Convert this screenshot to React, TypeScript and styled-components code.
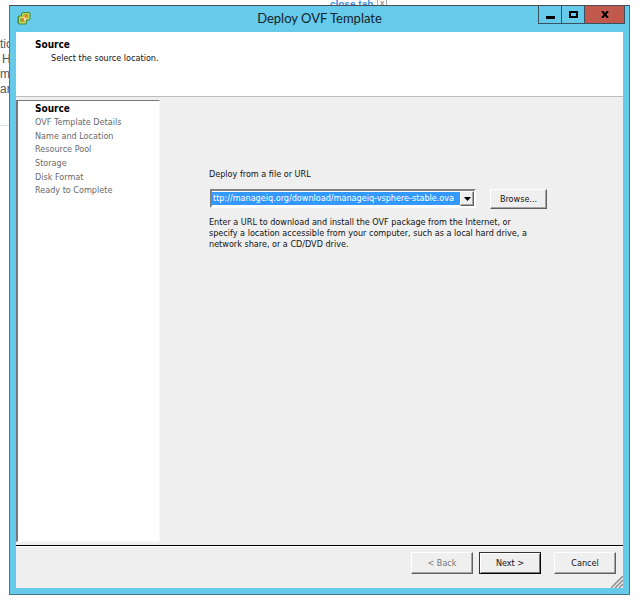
import React from 'react';
import styled, { createGlobalStyle, css } from 'styled-components';

const uiFont = '"DejaVu Sans Condensed", Tahoma, "DejaVu Sans", sans-serif';

const GlobalStyle = createGlobalStyle`
  *, *::before, *::after { box-sizing: border-box; }
  body { margin: 0; background: #fff; color: #111; font: 9px/11px ${uiFont}; }
  h1, h2, p, ol { margin: 0; padding: 0; }
  button, input { font: inherit; color: inherit; margin: 0; border-radius: 0; }
`;

const Desktop = styled.div`
  position: relative;
  display: flex;
  min-height: 100vh;
  padding: 5px 10px 9px 9px;
`;

const PageBehind = styled.div`
  position: absolute;
  top: 37px;
  left: 0;
  width: 20px;
  height: 89px;
  overflow: hidden;
  border-bottom: 1px solid #d5e3f0;
  color: #555;
  font: 12px/15px "Liberation Sans", Arial, sans-serif;
  white-space: pre;
`;

const PageLine = styled.div<{ $indent?: boolean }>`
  padding-left: ${p => (p.$indent ? 2 : 0)}px;
`;

const TabBehind = styled.div`
  position: absolute;
  top: -1px;
  left: 330px;
  display: flex;
  gap: 4px;
  height: 12px;
  font: bold 10px/12px "Liberation Sans", Arial, sans-serif;
`;

const CloseTab = styled.a`
  color: #3b8ede;
  text-decoration: none;
`;

const CloseMark = styled.span`
  width: 10px;
  border: solid #aaa;
  border-width: 0 1px;
  color: #777;
  font-size: 9px;
  font-weight: normal;
  line-height: 9px;
  text-align: center;
`;

const Window = styled.section`
  position: relative;
  flex: 1;
  display: flex;
  flex-direction: column;
  min-width: 0;
  padding: 0 6px 6px;
  background: #66caea;
  border: 1px solid #4d7585;
  border-top-color: #4c4c55;
`;

const TitleBar = styled.header`
  display: grid;
  grid-template-columns: 88px 1fr 88px;
  height: 26px;
`;

const AppIcon = styled.svg`
  width: 16px;
  height: 16px;
  margin: 4px 0 0;
`;

const Title = styled.h1`
  color: #14232b;
  font: 13px/25px Lato, "Segoe UI", sans-serif;
  text-align: center;
  white-space: nowrap;
`;

const WindowControls = styled.div`
  display: flex;
  width: 87px;
  height: 18px;
  border: 1px solid #39525f;
  border-top: 0;
  margin-left: 3px;
`;

const WindowControl = styled.button<{ $close?: boolean }>`
  display: flex;
  flex: ${p => (p.$close ? '0 0 40px' : '1')};
  align-items: center;
  justify-content: center;
  padding: 0;
  border: 0;
  border-left: 1px solid #39525f;
  background: ${p => (p.$close ? '#c2594d' : 'transparent')};
  &:first-child { border-left: 0; }
`;

const Client = styled.div`
  flex: 1;
  display: flex;
  flex-direction: column;
  background: #efefef;
`;

const StepHeader = styled.div`
  height: 65px;
  padding: 7px 19px;
  background: #fff;
  border-bottom: 1px solid #bdbdbd;
`;

const StepTitle = styled.h2`
  font: bold 10px/12px ${uiFont};
  color: #000;
`;

const StepHint = styled.p`
  padding: 2px 0 0 16px;
`;

const Body = styled.div`
  flex: 1;
  display: flex;
  padding: 3px 0 3px;
`;

const Steps = styled.ol`
  display: grid;
  grid-template-rows: repeat(7, 1fr);
  flex: 0 0 144px;
  padding: 1px 0 0 17px;
  list-style: none;
  background: #fff;
  border: 1px solid #f8f8f8;
  border-top-color: #777;
  border-left: 2px solid #777;
  align-content: start;
  grid-template-rows: 14px 14px 13px 14px 14px 13px 14px;
`;

const Step = styled.li<{ $current?: boolean }>`
  line-height: 13px;
  color: #6a6a6a;
  ${p => p.$current && css`
    color: #000;
    font: bold 10px/14px ${uiFont};
  `}
`;

const Form = styled.form`
  flex: 1;
  padding: 69px 49px 0;
`;

const FieldLabel = styled.label`
  display: block;
`;

const FieldRow = styled.div`
  display: flex;
  gap: 14px;
  padding: 9px 0 8px 1px;
`;

const ComboBox = styled.div`
  display: flex;
  flex: 0 1 266px;
  height: 19px;
  border: 2px solid;
  border-color: #808080 #fff #fff #808080;
  background: #fff;
`;

const UrlInput = styled.input`
  flex: 1;
  min-width: 0;
  padding: 0 1px;
  border: 1px solid #fff;
  border-width: 1px 0;
  background: #3399ff;
  color: #fff;
  outline: 0;
`;

const raised = css`
  border: 1px solid;
  border-color: #fff #606060 #606060 #fff;
  box-shadow: inset -1px -1px #a5a5a5;
  background: #efefef;
`;

const DropButton = styled.button`
  ${raised}
  display: flex;
  flex: 0 0 14px;
  align-items: center;
  justify-content: center;
  padding: 0;
`;

const Button = styled.button<{ $default?: boolean; $size?: 'small' }>`
  ${raised}
  width: ${p => (p.$size === 'small' ? 57 : 62)}px;
  height: ${p => (p.$size === 'small' ? 20 : 22)}px;
  padding: 0;
  ${p => p.$default && css`
    border-color: #333 #000 #000 #333;
    box-shadow: inset 1px 1px #fff, inset -1px -1px #777;
  `}
  &:disabled { color: #777; }
`;

const Footer = styled.footer`
  position: relative;
  display: flex;
  align-items: flex-start;
  height: 43px;
  padding: 6px 7px 0;
  border-top: 1px solid #000;
  box-shadow: inset 0 1px #fff;
`;

const ButtonPair = styled.div`
  display: flex;
  gap: 6px;
  margin: 0 13px 0 auto;
`;

const Grip = styled.svg`
  position: absolute;
  right: 0;
  bottom: 0;
  width: 12px;
  height: 12px;
`;

const steps = [
  'Source',
  'OVF Template Details',
  'Name and Location',
  'Resource Pool',
  'Storage',
  'Disk Format',
  'Ready to Complete',
];

export default function App() {
  return (
    <>
      <GlobalStyle />
      <Desktop>
        <PageBehind aria-hidden="true">
          <PageLine>tic</PageLine>
          <PageLine $indent>H</PageLine>
          <PageLine>m</PageLine>
          <PageLine>ar</PageLine>
        </PageBehind>
        <TabBehind>
          <CloseTab href="#">close tab</CloseTab>
          <CloseMark>x</CloseMark>
        </TabBehind>
        <Window aria-labelledby="window-title">
          <TitleBar>
            <AppIcon viewBox="0 0 16 16" aria-hidden="true">
              <path d="M6.500 2h7l1 1v6l-1 1.500H11V13l-1 1.500H3L1.500 13V7l1-1.500H5V3.500z" fill="#47893a" />
              <path d="M7 3h6l.5 .5V9l-.5 .5h-3V13l-.5 .5h-6L3 13V7l.5-.5H6V4z" fill="#c3db55" />
              <path d="M7.500 4.500H12V8H9v4H4.500V8h3z" fill="#4d8f37" />
              <path d="M8 5h3.500v2.500L8.500 11.500H5V8.500h2z" fill="#f2dc9a" />
              <path d="M8.500 5h3v2.500h-3zM5 8.500h3v3H5z" fill="#ea7a18" />
            </AppIcon>
            <Title id="window-title">Deploy OVF Template</Title>
            <WindowControls>
              <WindowControl aria-label="Minimize">
                <svg width="9" height="10"><path d="M0 6h9v3H0z" /></svg>
              </WindowControl>
              <WindowControl aria-label="Maximize">
                <svg width="9" height="7"><path d="M1 1h7v5H1z" fill="none" stroke="#000" strokeWidth="2" /></svg>
              </WindowControl>
              <WindowControl $close aria-label="Close">
                <svg width="8" height="7"><path d="M1 0l6 7M7 0L1 7" stroke="#000" strokeWidth="2" /></svg>
              </WindowControl>
            </WindowControls>
          </TitleBar>
          <Client>
            <StepHeader>
              <StepTitle>Source</StepTitle>
              <StepHint>Select the source location.</StepHint>
            </StepHeader>
            <Body>
              <Steps>
                {steps.map((step, i) => (
                  <Step key={step} $current={i === 0} aria-current={i === 0 ? 'step' : undefined}>
                    {step}
                  </Step>
                ))}
              </Steps>
              <Form onSubmit={e => e.preventDefault()}>
                <FieldLabel htmlFor="source-url">Deploy from a file or URL</FieldLabel>
                <FieldRow>
                  <ComboBox>
                    <UrlInput
                      id="source-url"
                      spellCheck={false}
                      defaultValue="ttp://manageiq.org/download/manageiq-vsphere-stable.ova"
                    />
                    <DropButton type="button" aria-label="Show recent locations">
                      <svg width="7" height="4"><path d="M0 0h7L3.500 4z" /></svg>
                    </DropButton>
                  </ComboBox>
                  <Button type="button" $size="small">Browse...</Button>
                </FieldRow>
                <p>
                  Enter a URL to download and install the OVF package from the Internet, or<br />
                  specify a location accessible from your computer, such as a local hard drive, a<br />
                  network share, or a CD/DVD drive.
                </p>
              </Form>
            </Body>
            <Footer>
              <ButtonPair>
                <Button type="button" disabled>&lt; Back</Button>
                <Button type="button" $default>Next &gt;</Button>
              </ButtonPair>
              <Button type="button">Cancel</Button>
              <Grip viewBox="0 0 12 12" aria-hidden="true">
                <path d="M0 12L12 0M4 12l8-8M8 12l4-4" stroke="#8a8a8a" strokeWidth="1.500" />
              </Grip>
            </Footer>
          </Client>
        </Window>
      </Desktop>
    </>
  );
}
